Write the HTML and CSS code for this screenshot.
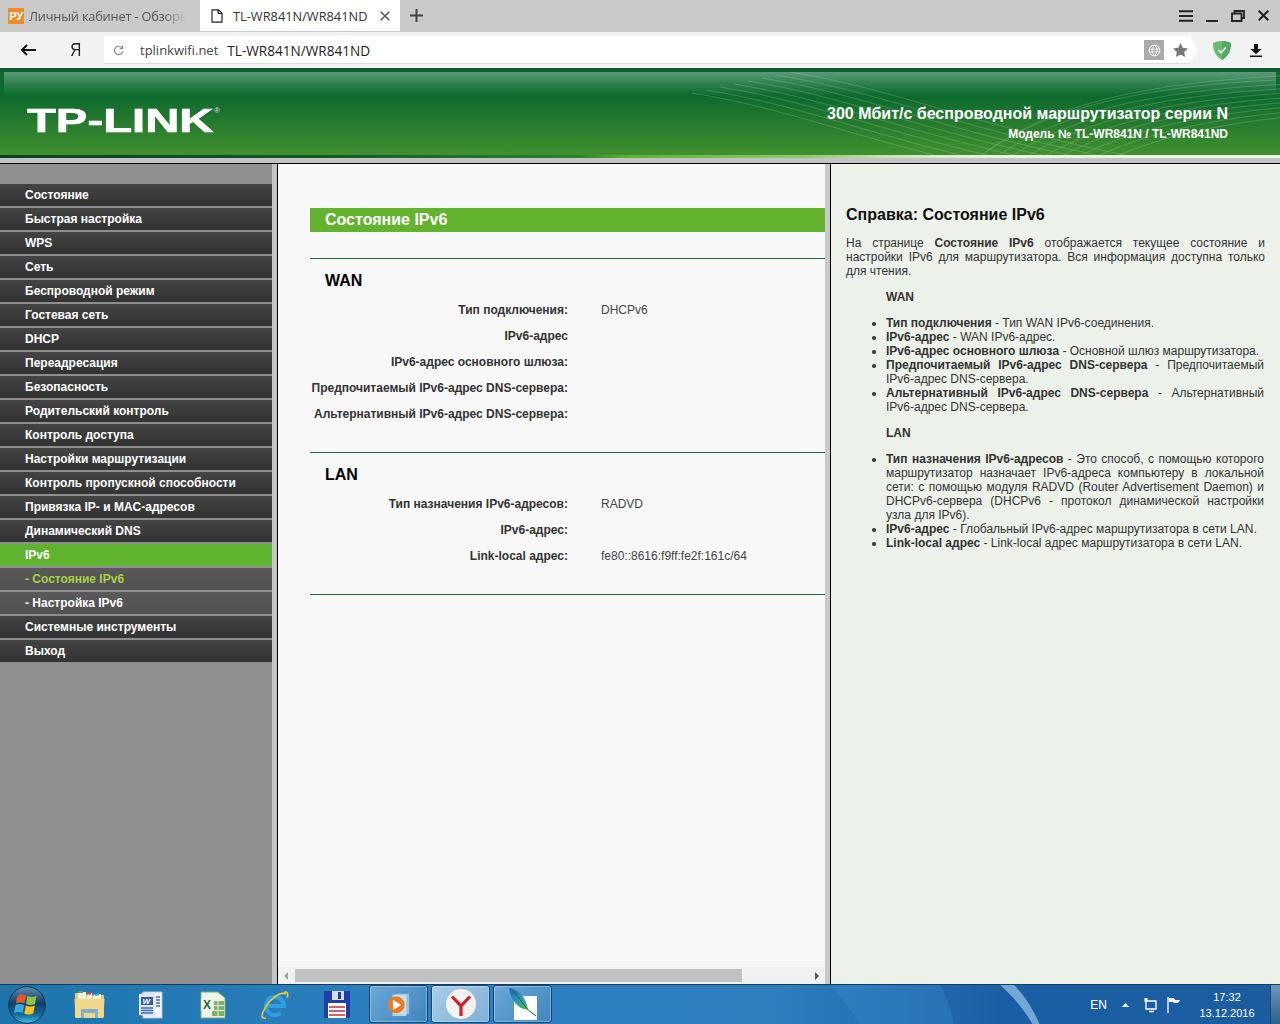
FILE: index.html
```html
<!DOCTYPE html>
<html lang="ru">
<head>
<meta charset="utf-8">
<title>TL-WR841N/WR841ND</title>
<link rel="stylesheet" href="styles.css">
</head>
<body>
<div class="tabstrip">
  <div class="tab inactive">
    <span class="favicon">РУ</span>
    <span class="tab-title fade">Личный кабинет - Обзоры</span>
  </div>
  <div class="tab active">
    <svg class="ico doc" viewBox="0 0 12 14" width="12" height="14"><path d="M1 .8h6.500L11 4.300v8.900H1zM7.200 1v3.500H11" fill="none" stroke="#222" stroke-width="1.200"/></svg>
    <span class="tab-title">TL-WR841N/WR841ND</span>
    <svg class="tab-close" viewBox="0 0 10 10" width="10" height="10"><path d="M.7.7l8.600 8.600M9.300.7L.7 9.300" stroke="#555" stroke-width="1.400"/></svg>
  </div>
  <svg class="newtab" viewBox="0 0 13 13" width="13" height="13"><path d="M6.500 0v13M0 6.500h13" stroke="#444" stroke-width="2"/></svg>
  <div class="winctl">
    <svg viewBox="0 0 14 12" width="14" height="12"><path d="M0 1.200h14M0 6h14M0 10.800h14" stroke="#222" stroke-width="2"/></svg>
    <svg viewBox="0 0 12 12" width="12" height="12"><path d="M0 11h12" stroke="#222" stroke-width="2"/></svg>
    <svg viewBox="0 0 14 12" width="14" height="12"><path d="M3.500 3V1h9.500v7H11M1 3.500h9.500v7.500H1z" fill="none" stroke="#222" stroke-width="1.800"/></svg>
    <svg viewBox="0 0 11 11" width="11" height="11"><path d="M.7.7l9.600 9.600M10.300.7L.7 10.300" stroke="#222" stroke-width="2"/></svg>
  </div>
</div>

<div class="toolbar">
  <svg class="back" viewBox="0 0 16 12" width="16" height="12"><path d="M16 6H2M7 1L2 6l5 5" fill="none" stroke="#111" stroke-width="2"/></svg>
  <span class="ya">Я</span>
  <div class="urlbar">
    <svg class="reload" viewBox="0 0 12 12" width="11" height="11"><path d="M10 3.500A4.600 4.600 0 1 0 10.600 7M10.500 .8v3H7.500" fill="none" stroke="#888" stroke-width="1.300"/></svg>
    <span class="host">tplinkwifi.net</span>
    <span class="pagetitle">TL-WR841N/WR841ND</span>
    <span class="globe"><svg viewBox="0 0 14 14" width="13" height="13"><circle cx="7" cy="7" r="5.800" fill="none" stroke="#fff" stroke-width="1"/><path d="M7 1.200C3.500 5 3.500 9 7 12.800M7 1.200C10.500 5 10.500 9 7 12.800M1.500 5.500h11M1.500 8.500h11" fill="none" stroke="#fff" stroke-width=".8"/></svg></span>
    <svg class="star" viewBox="0 0 16 15" width="15" height="14"><path d="M8 0l2.400 5.100 5.600.7-4.100 3.800 1.100 5.400L8 12.300 3 15l1.100-5.400L0 5.800l5.600-.7z" fill="#777"/></svg>
  </div>
  <svg class="shield" viewBox="0 0 18 19" width="18" height="19"><path d="M9 0c3 0 6 .6 9 2 0 8-2.500 13-9 17C2.500 15 0 10 0 2c3-1.400 6-2 9-2z" fill="#68bc71"/><path d="M9 0c3 0 6 .6 9 2 0 8-2.500 13-9 17z" fill="#57a862"/><path d="M5.500 9l2.700 2.600 4.500-5" fill="none" stroke="#fff" stroke-width="1.500"/></svg>
  <svg class="download" viewBox="0 0 12 13" width="12" height="13"><path d="M4 0h4v5h3.500L6 10.200.5 5H4zM0 11.500h12V13H0z" fill="#111"/></svg>
</div>

<header class="banner">
  <svg class="waves" viewBox="0 0 1280 84" width="1280" height="84" preserveAspectRatio="none">
    <defs>
      <path id="wa" d="M790 0C900 18 960 50 1130 84" fill="none" stroke="#fff" stroke-width=".6"/>
      <path id="wb" d="M980 84C1040 40 1130 15 1276 8" fill="none" stroke="#fff" stroke-width=".6"/>
    </defs>
    <g opacity=".28">
      <use href="#wa"/><use href="#wa" x="-14" y="3"/><use href="#wa" x="-28" y="6"/><use href="#wa" x="-42" y="9"/><use href="#wa" x="-56" y="12"/><use href="#wa" x="-70" y="15"/><use href="#wa" x="-84" y="18"/><use href="#wa" x="-98" y="21"/>
      <use href="#wb"/><use href="#wb" y="-4" x="6"/><use href="#wb" y="4" x="12"/><use href="#wb" y="8" x="20"/><use href="#wb" y="12" x="30"/><use href="#wb" y="16" x="40"/><use href="#wb" y="20" x="50"/><use href="#wb" y="24" x="60"/><use href="#wb" y="28" x="70"/><use href="#wb" y="32" x="80"/>
    </g>
  </svg>
  <div class="logo"><span class="logo-word">TP-LINK</span><span class="logo-reg">®</span></div>
  <div class="banner-text">
    <div class="product">300 Мбит/с беспроводной маршрутизатор серии N</div>
    <div class="model">Модель № TL-WR841N / TL-WR841ND</div>
  </div>
</header>
<div class="banner-foot"></div>

<div class="frames">
  <nav class="sidebar">
    <a class="item">Состояние</a>
    <a class="item">Быстрая настройка</a>
    <a class="item">WPS</a>
    <a class="item">Сеть</a>
    <a class="item">Беспроводной режим</a>
    <a class="item">Гостевая сеть</a>
    <a class="item">DHCP</a>
    <a class="item">Переадресация</a>
    <a class="item">Безопасность</a>
    <a class="item">Родительский контроль</a>
    <a class="item">Контроль доступа</a>
    <a class="item">Настройки маршрутизации</a>
    <a class="item">Контроль пропускной способности</a>
    <a class="item">Привязка IP- и MAC-адресов</a>
    <a class="item">Динамический DNS</a>
    <a class="item on">IPv6</a>
    <a class="item sub cur">- Состояние IPv6</a>
    <a class="item sub">- Настройка IPv6</a>
    <a class="item">Системные инструменты</a>
    <a class="item">Выход</a>
  </nav>

  <main class="main">
    <div class="main-body">
      <h1 class="page-title">Состояние IPv6</h1>
      <section class="block">
        <h2>WAN</h2>
        <div class="rows">
          <div class="lbl">Тип подключения:</div><div class="val">DHCPv6</div>
          <div class="lbl">IPv6-адрес</div><div class="val"></div>
          <div class="lbl">IPv6-адрес основного шлюза:</div><div class="val"></div>
          <div class="lbl">Предпочитаемый IPv6-адрес DNS-сервера:</div><div class="val"></div>
          <div class="lbl">Альтернативный IPv6-адрес DNS-сервера:</div><div class="val"></div>
        </div>
      </section>
      <section class="block lan">
        <h2>LAN</h2>
        <div class="rows">
          <div class="lbl">Тип назначения IPv6-адресов:</div><div class="val">RADVD</div>
          <div class="lbl">IPv6-адрес:</div><div class="val"></div>
          <div class="lbl">Link-local адрес:</div><div class="val">fe80::8616:f9ff:fe2f:161c/64</div>
        </div>
      </section>
      <div class="endline"></div>
    </div>
    <div class="hscroll">
      <span class="arrow left"></span>
      <div class="track"><div class="thumb"></div></div>
      <span class="arrow right"></span>
    </div>
  </main>

  <aside class="help">
    <h2>Справка: Состояние IPv6</h2>
    <p>На странице <b>Состояние IPv6</b> отображается текущее состояние и настройки IPv6 для маршрутизатора. Вся информация доступна только для чтения.</p>
    <div class="help-sec">WAN</div>
    <ul>
      <li><b>Тип подключения</b> - Тип WAN IPv6-соединения.</li>
      <li><b>IPv6-адрес</b> - WAN IPv6-адрес.</li>
      <li><b>IPv6-адрес основного шлюза</b> - Основной шлюз маршрутизатора.</li>
      <li><b>Предпочитаемый IPv6-адрес DNS-сервера</b> - Предпочитаемый IPv6-адрес DNS-сервера.</li>
      <li><b>Альтернативный IPv6-адрес DNS-сервера</b> - Альтернативный IPv6-адрес DNS-сервера.</li>
    </ul>
    <div class="help-sec">LAN</div>
    <ul>
      <li><b>Тип назначения IPv6-адресов</b> - Это способ, с помощью которого маршрутизатор назначает IPv6-адреса компьютеру в локальной сети: с помощью модуля RADVD (Router Advertisement Daemon) и DHCPv6-сервера (DHCPv6 - протокол динамической настройки узла для IPv6).</li>
      <li><b>IPv6-адрес</b> - Глобальный IPv6-адрес маршрутизатора в сети LAN.</li>
      <li><b>Link-local адрес</b> - Link-local адрес маршрутизатора в сети LAN.</li>
    </ul>
  </aside>
</div>

<footer class="taskbar">
  <svg class="streak" viewBox="0 0 1280 40" width="1280" height="40" preserveAspectRatio="none">
    <path d="M1000 0h14c12 12 20 26 26 40h-7c-8-14-19-28-33-40z" fill="#8fc0e6" opacity=".75"/>
    <path d="M830 0h110c8 14 12 28 14 40H860c-8-14-18-28-30-40z" fill="#3b8ccb" opacity=".35"/>
  </svg>
  <svg class="orb" viewBox="0 0 38 38" width="38" height="38">
    <defs><linearGradient id="orbfill" x1="0" y1="0" x2="0" y2="1"><stop offset="0" stop-color="#5d8fb5"/><stop offset=".45" stop-color="#123f66"/><stop offset=".75" stop-color="#14679a"/><stop offset="1" stop-color="#3fc0e8"/></linearGradient></defs>
    <circle cx="19" cy="19" r="18.300" fill="url(#orbfill)" stroke="#0c3555"/>
    <path d="M9.500 9.500c3-1.400 6-1.400 8.500 0l-1.500 8c-2.500-1.400-5.400-1.400-8.700 0z" fill="#e8552c"/>
    <path d="M19.500 10c2.600 1.400 5.600 1.400 9 0l-1.500 8c-3.200 1.400-6.200 1.400-9 0z" fill="#8cc63f"/>
    <path d="M7.500 19c3.200-1.400 6.200-1.400 8.700 0l-1.500 8c-2.500-1.400-5.400-1.400-8.700 0z" fill="#3ba6e0"/>
    <path d="M17.800 19.500c2.800 1.400 5.800 1.400 9 0L25.300 27.500c-3.200 1.400-6.200 1.400-9 0z" fill="#f8c11e"/>
  </svg>
  <div class="pins">
    <span class="pin"><svg viewBox="0 0 33 30" width="33" height="30"><path d="M2 3h9l2 2h18v22H2z" fill="#e3c778"/><path d="M5 2h8v8H5z" fill="#f6f1dc"/><path d="M5 1h5v2H5z" fill="#54a84a"/><path d="M14 3h5v8h-5zM20 4h8v7h-8z" fill="#f6f1dc"/><path d="M13 2.500h5v2h-5z" fill="#d0483c"/><path d="M20 3.500h6v2h-6z" fill="#3ca4cf"/><path d="M1.500 9h30l-1 19h-28z" fill="#f0d888"/><path d="M8 28v-9h17v9h-3v-5H11v5z" fill="#7fb2d2"/></svg></span>
    <span class="pin"><svg viewBox="0 0 30 30" width="30" height="30"><path d="M7 2h19v26H7z" fill="#f4f6fa" stroke="#b8c2d6"/><path d="M3 4l16-2v25L3 25z" fill="#dfe7f3"/><path d="M5 7h12v8H5z" fill="#2f5fae"/><text x="6.500" y="14" class="w-letter">W</text><path d="M5 18h12M5 20.500h12M5 23h12M20 7h4M20 10h4M20 13h4M20 16h4" stroke="#3d6cb5" stroke-width="1.400"/></svg></span>
    <span class="pin"><svg viewBox="0 0 30 30" width="30" height="30"><path d="M3 2h17l7 6v20H3z" fill="#eef4e8" stroke="#7fae73"/><path d="M14 11h12v15H14z" fill="#7fb069"/><path d="M14 15.500h12M14 20.500h12M20 11v15" stroke="#eef4e8" stroke-width="1"/><path d="M3 9h13v11H3z" fill="#eef4e8"/><text x="5" y="19" class="x-letter">X</text></svg></span>
    <span class="pin"><svg viewBox="0 0 30 30" width="30" height="30"><path d="M7 16h17a9 9 0 1 0-3.200 7" fill="none" stroke="#2e9fe0" stroke-width="4.200"/><path d="M26 4C20 1 9 9 3 22c-2 5-1 7 3 6" fill="none" stroke="#e8c23b" stroke-width="1.700"/><path d="M24 2.500c3-1 5 1 3 5" fill="none" stroke="#e8c23b" stroke-width="1.700"/></svg></span>
    <span class="pin"><svg viewBox="0 0 30 30" width="30" height="30"><path d="M2 1h26v27H2z" fill="#1c3ea6"/><path d="M10 1h12v9H10z" fill="#d7dce6"/><path d="M16 2h3v7h-3z" fill="#1c3ea6"/><path d="M6 13h18v15H6z" fill="#fff"/><path d="M7 17h16M7 21h16M7 25h16" stroke="#c22b43" stroke-width="1.600"/></svg></span>
  </div>
  <div class="runs">
    <span class="run"><svg viewBox="0 0 28 30" width="26" height="28"><path d="M10 4h15v22H10z" fill="#b6d4e8" opacity=".7"/><path d="M7 5h15v23H7z" fill="#cfe3f0" opacity=".8"/><circle cx="11" cy="16" r="9" fill="#ee7a1d"/><path d="M7.500 10.500l9 5.500-9 5.500z" fill="#fff"/></svg></span>
    <span class="run bright"><svg viewBox="0 0 32 32" width="32" height="32"><circle cx="16" cy="16" r="15" fill="#f3f3f1"/><path d="M7 8.500l9 9.500v10M25 8.500l-9 9.500" fill="none" stroke="#cf1f26" stroke-width="3.200"/></svg></span>
    <span class="run"><svg viewBox="0 0 30 32" width="30" height="32"><defs><linearGradient id="quill" x1="0" y1="0" x2="1" y2="1"><stop offset="0" stop-color="#1c5ec4"/><stop offset=".55" stop-color="#2a9ab0"/><stop offset="1" stop-color="#5cbb4c"/></linearGradient></defs><path d="M6 8h23v24H6z" fill="#fff"/><path d="M1 0c9 1 17 9 19 21-7 2-17-7-19-21z" fill="url(#quill)"/><path d="M5 3c5 6 10 12 14 18l9 7" fill="none" stroke="#24623a" stroke-width="1"/></svg></span>
  </div>
  <div class="tray">
    <span class="lang">EN</span>
    <svg class="caret" viewBox="0 0 7 4" width="7" height="4"><path d="M3.500 0L7 4H0z" fill="#fff"/></svg>
    <svg class="net" viewBox="0 0 14 16" width="14" height="16"><path d="M3 4h10v8H3zM6 14.500h5" fill="none" stroke="#fff" stroke-width="1.300"/><path d="M1.500 1h3v4h-3z" fill="#fff"/></svg>
    <svg class="flag" viewBox="0 0 13 16" width="13" height="16"><path d="M1 0v16" stroke="#fff" stroke-width="1.300"/><path d="M2 1h5l1 2h5l-2 3H7L6 5H2z" fill="#fff"/></svg>
    <div class="clock"><div>17:32</div><div>13.12.2016</div></div>
    <span class="showdesk"></span>
  </div>
</footer>
</body>
</html>
```
FILE: styles.css
```css
* { box-sizing: border-box; }
html, body { margin: 0; padding: 0; }
body {
  width: 1280px; height: 1024px; overflow: hidden;
  display: flex; flex-direction: column;
  font-family: "Liberation Sans", Arial, sans-serif;
  font-size: 12px; background: #c8c8c8;
}
/* browser chrome */
.tabstrip { height: 32px; flex: none; display: flex; align-items: flex-start; background: #c9c9c9; font-family: "Open Sans", "Noto Sans", sans-serif; font-size: 12.8px; }
.tab { height: 31px; width: 200px; display: flex; align-items: center; white-space: nowrap; overflow: hidden; }
.tab.inactive { padding-left: 8px; color: #555; letter-spacing: -.2px; }
.tab.active { background: #fff; padding-left: 11px; color: #333; }
.favicon { width: 16px; height: 16px; flex: none; background: #f08c28; color: #fff; font: bold 11px/16px "Liberation Sans", sans-serif; text-align: center; margin-right: 5px; }
.fade { -webkit-mask-image: linear-gradient(90deg, #000 84%, transparent 98%); mask-image: linear-gradient(90deg, #000 84%, transparent 98%); }
.doc { flex: none; margin-right: 10px; }
.tab-close { margin-left: 13px; flex: none; }
.newtab { margin: 9px 0 0 10px; flex: none; }
.winctl { margin-left: auto; height: 31px; display: flex; align-items: center; gap: 13px; padding-right: 11px; }

.toolbar { height: 36px; flex: none; display: flex; align-items: center; background: #f2f2f2; padding: 0 0 0 20px; }
.back { flex: none; }
.ya { width: 16px; margin-left: 33px; font: 18px "Liberation Sans", sans-serif; color: #222; transform: scaleX(.85); }
.urlbar { width: 1094px; height: 28px; margin: 0 0 0 19px; background: #fff; display: flex; align-items: center; clip-path: polygon(0 0, 1086px 0, 100% 50%, 1086px 100%, 0 100%); font-family: "Open Sans", "Noto Sans", sans-serif; font-size: 13px; padding-left: 9px; box-shadow: inset 0 -1px 0 #ddd; }
.reload { flex: none; }
.host { margin-left: 16px; color: #444; }
.pagetitle { margin-left: 9px; color: #222; font-size: 13.6px; }
.globe { margin-left: auto; width: 20px; height: 20px; background: #aaa; display: flex; align-items: center; justify-content: center; }
.star { margin: 0 10px 0 9px; flex: none; }
.shield { margin-left: 15px; flex: none; }
.download { margin-left: 19px; flex: none; }

/* router banner */
.banner {
  position: relative; height: 87px; flex: none; display: flex; justify-content: space-between; align-items: flex-start; overflow: hidden;
  border-top: 4px solid #0f5c30;
  background:
    linear-gradient(#0f6a30, #0f6a30) 0 0 / 4px 24px no-repeat,
    linear-gradient(#0f6a30, #0f6a30) 100% 0 / 4px 24px no-repeat,
    linear-gradient(180deg, #5c9b78 0, #2d7f4f 12px, #0c6a2e 24px, #2a7d2e 55px, #3f912f 83px);
  color: #fff;
}
.waves { position: absolute; left: 0; top: 0; }
.logo { position: relative; margin: 31px 0 0 27px; display: flex; align-items: flex-start; height: 34px; }
.logo-word { display: block; font: bold 34px/34px "Liberation Sans", sans-serif; transform: scaleX(1.39); transform-origin: 0 0; color: #fff; -webkit-text-stroke: .7px #fff; }
.logo-reg { position: absolute; left: 187px; top: 3px; font-size: 8px; color: #d8e8d8; }
.banner-text { position: relative; text-align: right; padding: 32px 52px 0 0; font-weight: bold; }
.product { font-size: 16px; line-height: 20px; }
.model { font-size: 12px; line-height: 20px; }
.banner-foot { height: 8px; flex: none; background: linear-gradient(90deg, #0f3f22 0, #14582a 25%, #2a8030 45%, #5fb030 49%, #92c870 63%, #cfe4bd 70%, #eef3e8 78%, #eef3e8 100%) 0 0 / 100% 3px no-repeat, #c4c4c4; }

.frames { height: 821px; flex: none; display: flex; background: #c8c8c8; border-top: 1px solid #000; }

/* left menu */
.sidebar { width: 278px; flex: none; background: #8f8f8f; border-right: 1px solid #000; padding: 20px 5px 0 0; box-shadow: inset -5px 0 0 #c4c4c4; display: flex; flex-direction: column; gap: 2px; }
.item { display: block; height: 22px; padding-left: 25px; line-height: 22px; color: #fff; font-weight: bold; background: linear-gradient(180deg, #444 0, #333 100%); white-space: nowrap; }
.item.on { background: #5fb32f; }
.item.sub { background: linear-gradient(180deg, #5a5a5a, #505050); }
.item.cur { color: #a4d044; }

/* main frame */
.main { width: 547px; flex: none; display: flex; flex-direction: column; background: #f8f8f8; }
.main-body { flex: 1; padding: 44px 0 0 32px; overflow: hidden; }
.page-title { margin: 0; height: 24px; padding-left: 15px; background: #63b32f; color: #fff; font-size: 16px; line-height: 23px; font-weight: bold; }
.block { margin-top: 26px; border-top: 1px solid #1b6b3c; padding-top: 11px; }
.block.lan { margin-top: 25px; }
.block h2 { margin: 0; padding-left: 15px; font-size: 16px; line-height: 22px; color: #000; font-weight: bold; }
.rows { display: grid; grid-template-columns: 258px auto; column-gap: 33px; grid-auto-rows: 26px; margin-top: 5px; line-height: 26px; }
.lbl { text-align: right; font-weight: bold; color: #333; white-space: nowrap; }
.val { color: #444; white-space: nowrap; }
.endline { margin-top: 25px; border-top: 1px solid #1b6b3c; }
.hscroll { height: 17px; flex: none; display: flex; align-items: center; background: #f1f1f1; padding: 0 6px; }
.track { flex: 1; padding: 0 8px 0 7px; height: 13px; }
.thumb { width: 447px; height: 13px; background: #c1c1c1; }
.arrow { width: 0; height: 0; border-top: 4px solid transparent; border-bottom: 4px solid transparent; flex: none; }
.arrow.left { border-right: 4px solid #a3a3a3; }
.arrow.right { border-left: 4px solid #505050; }

/* help frame */
.help { flex: 1; background: #ecf2ea; border-left: 1px solid #000; margin-left: 5px; padding: 42px 15px 0 15px; color: #333; line-height: 14px; }
.help h2 { margin: 0; font-size: 16px; line-height: 18px; color: #111; font-weight: bold; }
.help p { margin: 12px 0 0; text-align: justify; }
.help-sec { margin: 12px 0 0 40px; font-weight: bold; }
.help ul { margin: 12px 1px 0 0; padding-left: 40px; }
.help li { text-align: justify; }

/* Windows taskbar */
.taskbar { position: relative; height: 40px; flex: none; display: flex; align-items: center; overflow: hidden; border-top: 1px solid #143d5e; background: linear-gradient(90deg, #1e75ab 0, #2b7fbf 30%, #2f7fbf 60%, #1a5fa4 78%, #1b5d9f 100%); color: #fff; }
.streak { position: absolute; left: 0; top: 0; }
.orb { position: relative; margin-left: 8px; flex: none; }
.pins { position: relative; display: flex; margin-left: 12px; }
.pin { width: 62px; height: 39px; display: flex; align-items: center; justify-content: center; }
.w-letter { font: italic bold 8px "Liberation Sans", sans-serif; fill: #fff; }
.x-letter { font: bold 12px "Liberation Sans", sans-serif; fill: #2b6b2c; }
.runs { position: relative; display: flex; gap: 3px; margin-left: 1px; height: 39px; }
.run { width: 59px; height: 38px; display: flex; align-items: center; justify-content: center; border: 1px solid #16466f; border-radius: 3px; background: linear-gradient(135deg, #6aa7d4, #3f86c0); box-shadow: inset 0 0 0 1px rgba(255,255,255,.3); }
.run.bright { background: linear-gradient(135deg, #a9cde8, #7eb0d8); }
.tray { position: relative; margin-left: auto; display: flex; align-items: center; height: 39px; }
.lang { font: 12px "Liberation Sans", sans-serif; margin-right: 15px; }
.caret { margin-right: 14px; }
.net { margin-right: 10px; }
.flag { margin-right: 19px; }
.clock { text-align: center; font-size: 11px; line-height: 16px; width: 56px; }
.showdesk { width: 10px; height: 39px; margin-left: 15px; background: linear-gradient(180deg, #6f98b8, #2a5f8f); border-left: 1px solid #184a75; }
```
